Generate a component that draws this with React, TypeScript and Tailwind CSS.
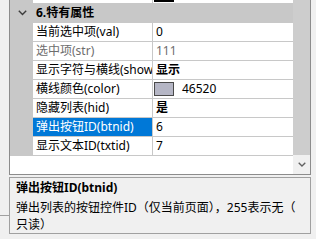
const font = "font-['Noto_Sans','Noto_Sans_CJK_SC',sans-serif]"

type Row = {
  label: string
  value: string
  disabled?: boolean
  bold?: boolean
  swatch?: string
  selected?: boolean
}

const rows: Row[] = [
  { label: '当前选中项(val)', value: '0' },
  { label: '选中项(str)', value: '111', disabled: true },
  { label: '显示字符与横线(show', value: '显示', bold: true },
  { label: '横线颜色(color)', value: '46520', swatch: '#b5b6c5' },
  { label: '隐藏列表(hid)', value: '是', bold: true },
  { label: '弹出按钮ID(btnid)', value: '6', selected: true },
  { label: '显示文本ID(txtid)', value: '7' },
]

function PropRow({ row }: { row: Row }) {
  return (
    <div className="flex h-[19px] border-b border-[#c8c8c8]">
      <div className="w-[23px] shrink-0 bg-[#c8c8c8]" />
      <div
        className={`w-[120px] shrink-0 overflow-hidden whitespace-nowrap border-r border-[#c8c8c8] pl-[3px] leading-[18px] ${
          row.selected ? 'bg-[#0078d7] text-white' : row.disabled ? 'bg-white text-[#6d6d6d]' : 'bg-white text-black'
        }`}
      >
        {row.label}
      </div>
      <div
        className={`flex flex-1 items-center overflow-hidden whitespace-nowrap bg-white leading-[18px] ${
          row.swatch ? 'pl-px' : 'pl-[3px]'
        } ${row.disabled ? 'text-[#6d6d6d]' : 'text-black'} ${row.bold ? 'font-bold' : ''}`}
      >
        {row.swatch && (
          <span
            className="mr-[8px] h-[14px] w-[20px] shrink-0 border border-[#4a4a4a]"
            style={{ backgroundColor: row.swatch }}
          />
        )}
        {row.value}
      </div>
    </div>
  )
}

export default function App() {
  return (
    <div className={`flex h-[239px] w-[316px] overflow-hidden bg-[#f0f0f0] text-[12px] ${font}`}>
      {/* left strip */}
      <div className="flex w-[9px] shrink-0 flex-col">
        <div className="h-[215px]" />
        <div className="flex-1 border-t border-[#a0a0a0]" />
      </div>

      <div className="flex w-[302px] shrink-0 flex-col">
        {/* property grid */}
        <div className="flex h-[175px] border-x border-b border-[#8c8c8c]">
          <div className="flex w-[283px] shrink-0 flex-col bg-white">
            {/* tail of previous row */}
            <div className="flex h-[4px] border-b border-[#c8c8c8]">
              <div className="w-[23px] bg-[#c8c8c8]" />
              <div className="w-[120px] border-r border-[#c8c8c8]" />
              <div className="flex-1 pl-px">
                <div className="h-[2px] w-[20px] bg-black" />
              </div>
            </div>

            {/* category */}
            <div className="flex h-[19px] items-center border-b border-[#c8c8c8] bg-[#c8c8c8]">
              <div className="flex w-[23px] shrink-0 justify-center pl-[1px]">
                <svg width="9" height="6" viewBox="0 0 9 6">
                  <polyline points="0.8,0.8 4.5,4.5 8.2,0.8" fill="none" stroke="#3c3c3c" strokeWidth="1.4" />
                </svg>
              </div>
              <span className="pl-[3px] font-bold text-black">6.特有属性</span>
            </div>

            {rows.map((r) => (
              <PropRow key={r.label} row={r} />
            ))}

            <div className="flex-1 bg-white" />
          </div>

          {/* scrollbar */}
          <div className="flex w-[17px] shrink-0 flex-col">
            <div className="h-[155px] bg-[#cdcdcd]" />
            <div className="flex flex-1 items-center justify-center bg-[#f0f0f0]">
              <svg width="8" height="5" viewBox="0 0 8 5">
                <polyline points="0.7,0.7 4,4 7.3,0.7" fill="none" stroke="#606060" strokeWidth="1.3" />
              </svg>
            </div>
          </div>
        </div>

        {/* description pane */}
        <div className="mt-[2px] h-[57px] overflow-hidden border border-[#a0a0a0] bg-[#f0f0f0] pl-[6px] text-black">
          <div className="pt-[2px] font-bold leading-[16px]">弹出按钮ID(btnid)</div>
          <div className="mt-[3px] whitespace-nowrap leading-[17px]">
            弹出列表的按钮控件ID（仅当前页面），255表示无（
            <br />
            只读）
          </div>
        </div>
      </div>
    </div>
  )
}
